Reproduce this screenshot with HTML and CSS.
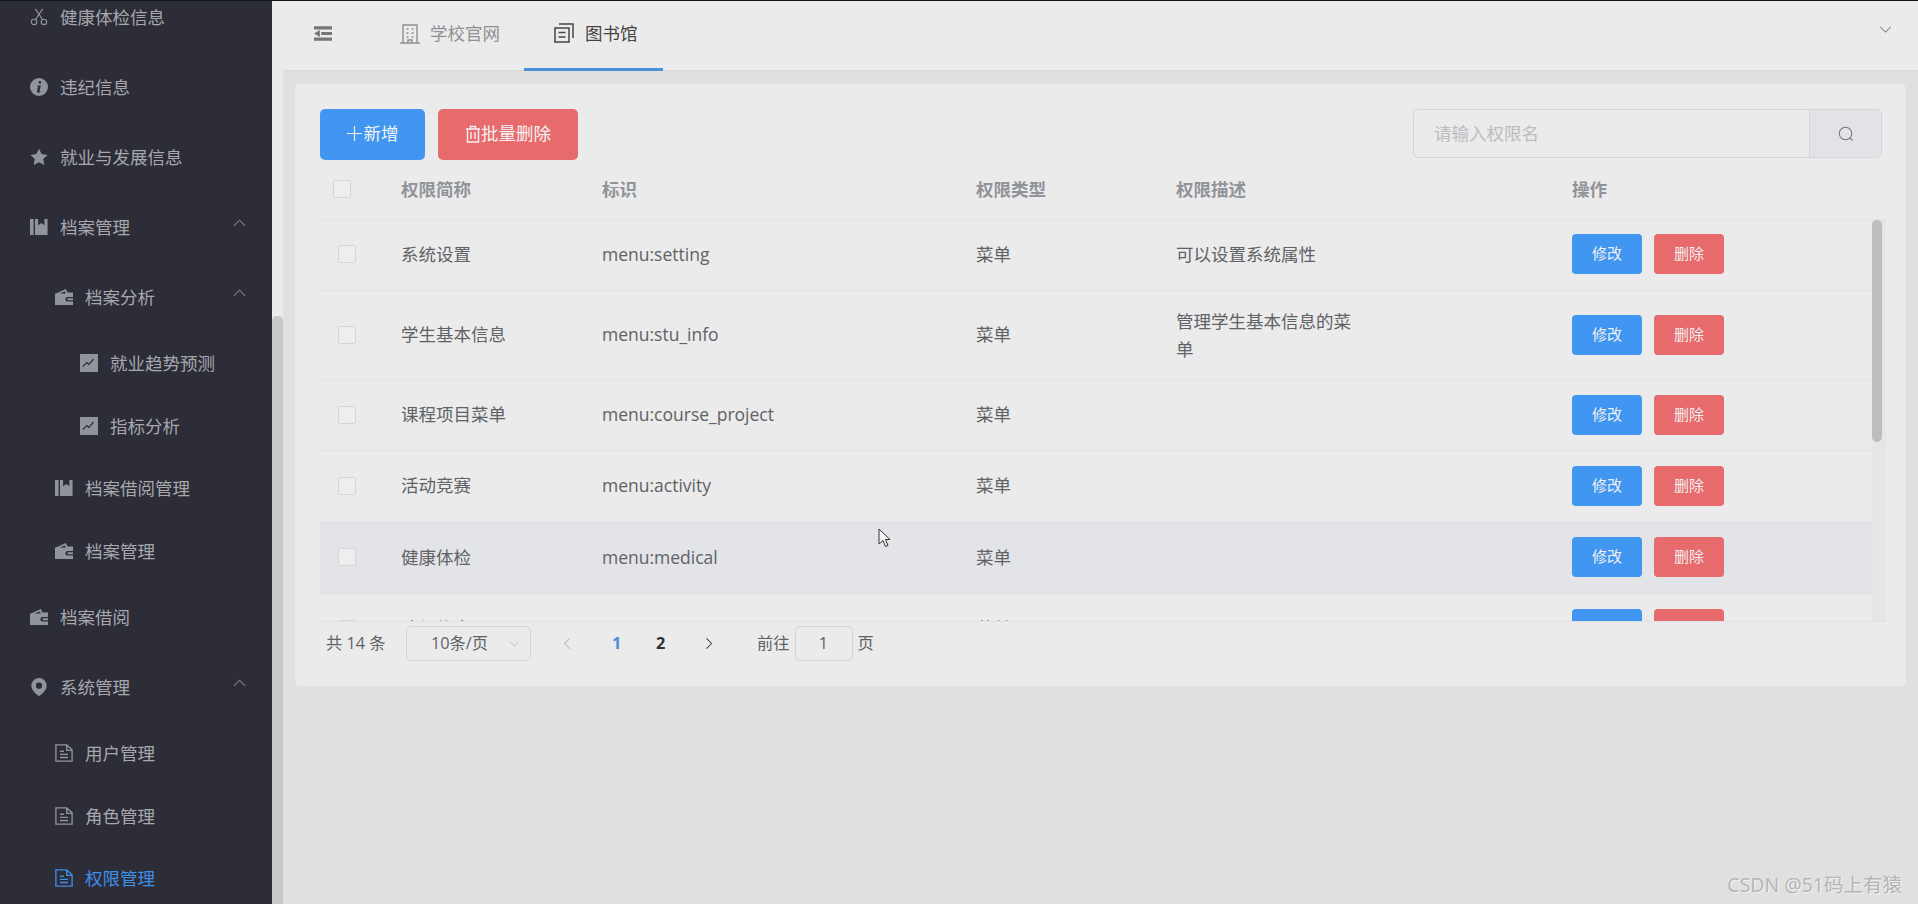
FILE: index.html
```html
<!DOCTYPE html>
<html lang="en">
<head>
    <meta charset="UTF-8">
    <meta name="viewport" content="width=device-width, initial-scale=1.0">
    <title>权限管理</title>
    <link rel="stylesheet" href="styles.css">
</head>
<body>
<svg class="icon-defs" width="0" height="0">
    <symbol id="i-scissors" viewBox="0 0 20 20">
        <circle cx="4.500" cy="15.500" r="3" fill="none" stroke="currentColor" stroke-width="1.300"/>
        <circle cx="15.500" cy="15.500" r="3" fill="none" stroke="currentColor" stroke-width="1.300"/>
        <path d="M6 13 14 1M14 13 6 1" fill="none" stroke="currentColor" stroke-width="1.300"/>
    </symbol>
    <symbol id="i-info" viewBox="0 0 20 20">
        <path fill-rule="evenodd" d="M10 0a10 10 0 1 1 0 20 10 10 0 0 1 0-20zm1 3.200a1.600 1.600 0 1 0 0 3.200 1.600 1.600 0 0 0 0-3.200zM8 8.200l-.2.9h1.200l-1.300 5.600c-.2 1 .4 1.600 1.400 1.600 1 0 1.800-.4 2.500-1l.1-.8h-1.100l1.500-6.300z"/>
    </symbol>
    <symbol id="i-star" viewBox="0 0 20 20">
        <path d="M10 .8l2.900 6 6.600.9-4.800 4.600 1.200 6.500L10 15.700l-5.900 3.100 1.200-6.500L.5 7.700l6.600-.9z"/>
    </symbol>
    <symbol id="i-book" viewBox="0 0 20 20">
        <path d="M0 1h4v18H0zM5.500 1H9v7l3.500-2.500L16 8V1h3.500v18h-14z"/>
    </symbol>
    <symbol id="i-wallet" viewBox="0 0 20 20">
        <path fill-rule="evenodd" d="M1 6 12 1l2 4h6v5h-6a2.500 2.500 0 0 0 0 5h6v4H0V6zm4 0h7l-1-2zm9 5.500h6v2h-6z"/>
    </symbol>
    <symbol id="i-chart" viewBox="0 0 20 20">
        <path fill-rule="evenodd" d="M0 0h20v20H0zm3.500 14.500 4-4 2.500 2 5.500-6.500-1-1-4.500 5.500-2.500-2-5 5z"/>
    </symbol>
    <symbol id="i-location" viewBox="0 0 20 20">
        <path fill-rule="evenodd" d="M10 0a8.500 8.500 0 0 1 8.500 8.500C18.500 13 14 17.500 10 20 6 17.500 1.500 13 1.500 8.500A8.500 8.500 0 0 1 10 0zm0 5a3.500 3.500 0 1 0 0 7 3.500 3.500 0 0 0 0-7z"/>
    </symbol>
    <symbol id="i-doc" viewBox="0 0 20 20">
        <path d="M1 1h12l6 5.500V19H1zM13 1v6h6M5.500 8H10M5.500 11.500h9M5.500 15h9" fill="none" stroke="currentColor" stroke-width="1.500"/>
    </symbol>
    <symbol id="i-fold" viewBox="0 0 20 16">
        <path d="M0 0h20v3.500H0zM8 6.200h12v3.500H8zM0 12.500h20V16H0zM6.500 4.200v7.600L0 8z"/>
    </symbol>
    <symbol id="i-building" viewBox="0 0 20 20">
        <path d="M3 19V1h14v18M0 19h20M6.500 5h2M11.500 5h2M6.500 9h2M11.500 9h2M6.500 13h2M11.500 13h2M8 19v-3h4v3" fill="none" stroke="currentColor" stroke-width="1.400"/>
    </symbol>
    <symbol id="i-tickets" viewBox="0 0 20 20">
        <path d="M1 5h14v14H1zM5 1h14v14M4.500 9.500h7M4.500 14h7" fill="none" stroke="currentColor" stroke-width="1.500"/>
    </symbol>
    <symbol id="i-chevron-up" viewBox="0 0 14 8">
        <path d="M1 7 7 1l6 6" fill="none" stroke="currentColor" stroke-width="1.200"/>
    </symbol>
    <symbol id="i-chevron-down" viewBox="0 0 14 8">
        <path d="M1 1l6 6 6-6" fill="none" stroke="currentColor" stroke-width="1.200"/>
    </symbol>
    <symbol id="i-plus" viewBox="0 0 16 16">
        <path d="M8 0v16M0 8h16" fill="none" stroke="currentColor" stroke-width="1.300"/>
    </symbol>
    <symbol id="i-trash" viewBox="0 0 16 18">
        <path d="M1 4h14M5.500 4V1.500h5V4M2.500 4v13h11V4M6 7v7M10 7v7" fill="none" stroke="currentColor" stroke-width="1.400"/>
    </symbol>
    <symbol id="i-search" viewBox="0 0 18 18">
        <circle cx="8.500" cy="8.500" r="7" fill="none" stroke="currentColor" stroke-width="1.200"/>
        <path d="M13.500 13.500 16.500 16.500" fill="none" stroke="currentColor" stroke-width="1.200"/>
    </symbol>
</svg>

<div class="page">
    <!-- Left menu, scrolled part way down -->
    <aside class="sidebar">
        <nav class="menu">
            <div class="menu-item level-1"><svg class="menu-icon"><use href="#i-scissors"/></svg>健康体检信息</div>
            <div class="menu-item level-1"><svg class="menu-icon"><use href="#i-info"/></svg>违纪信息</div>
            <div class="menu-item level-1"><svg class="menu-icon"><use href="#i-star"/></svg>就业与发展信息</div>
            <div class="menu-item level-1"><svg class="menu-icon"><use href="#i-book"/></svg>档案管理<svg class="menu-arrow"><use href="#i-chevron-up"/></svg></div>
            <div class="menu-item level-2"><svg class="menu-icon"><use href="#i-wallet"/></svg>档案分析<svg class="menu-arrow"><use href="#i-chevron-up"/></svg></div>
            <div class="menu-item sub level-3"><svg class="menu-icon"><use href="#i-chart"/></svg>就业趋势预测</div>
            <div class="menu-item sub level-3"><svg class="menu-icon"><use href="#i-chart"/></svg>指标分析</div>
            <div class="menu-item sub level-2"><svg class="menu-icon"><use href="#i-book"/></svg>档案借阅管理</div>
            <div class="menu-item sub level-2"><svg class="menu-icon"><use href="#i-wallet"/></svg>档案管理</div>
            <div class="menu-item level-1"><svg class="menu-icon"><use href="#i-wallet"/></svg>档案借阅</div>
            <div class="menu-item level-1"><svg class="menu-icon"><use href="#i-location"/></svg>系统管理<svg class="menu-arrow"><use href="#i-chevron-up"/></svg></div>
            <div class="menu-item sub level-2"><svg class="menu-icon"><use href="#i-doc"/></svg>用户管理</div>
            <div class="menu-item sub level-2"><svg class="menu-icon"><use href="#i-doc"/></svg>角色管理</div>
            <div class="menu-item sub level-2 active"><svg class="menu-icon"><use href="#i-doc"/></svg>权限管理</div>
        </nav>
    </aside>

    <div class="page-scroll"><div class="page-thumb"></div></div>

    <main class="main">
        <header class="topbar">
            <svg class="fold-icon"><use href="#i-fold"/></svg>
            <div class="tab"><svg class="tab-icon"><use href="#i-building"/></svg>学校官网</div>
            <div class="tab tab-active"><svg class="tab-icon"><use href="#i-tickets"/></svg>图书馆</div>
            <svg class="topbar-arrow"><use href="#i-chevron-down"/></svg>
        </header>

        <section class="card">
            <div class="toolbar">
                <div class="button button-blue"><svg class="plus-icon"><use href="#i-plus"/></svg>新增</div>
                <div class="button button-red"><svg class="trash-icon"><use href="#i-trash"/></svg>批量删除</div>
                <div class="search">
                    <div class="search-input">请输入权限名</div>
                    <div class="search-button"><svg class="search-icon"><use href="#i-search"/></svg></div>
                </div>
            </div>

            <table class="table table-head">
                <colgroup>
                    <col class="col-check"><col class="col-name"><col class="col-key"><col class="col-type"><col class="col-desc"><col>
                </colgroup>
                <tr>
                    <th><span class="checkbox checkbox-head"></span></th>
                    <th>权限简称</th>
                    <th>标识</th>
                    <th>权限类型</th>
                    <th>权限描述</th>
                    <th>操作</th>
                </tr>
            </table>

            <div class="table-body">
                <table class="table">
                    <colgroup>
                        <col class="col-check"><col class="col-name"><col class="col-key"><col class="col-type"><col class="col-desc"><col>
                    </colgroup>
                    <tr>
                        <td><span class="checkbox"></span></td>
                        <td>系统设置</td>
                        <td>menu:setting</td>
                        <td>菜单</td>
                        <td>可以设置系统属性</td>
                        <td><div class="actions"><div class="mini mini-blue">修改</div><div class="mini mini-red">删除</div></div></td>
                    </tr>
                    <tr class="row-tall">
                        <td><span class="checkbox"></span></td>
                        <td>学生基本信息</td>
                        <td>menu:stu_info</td>
                        <td>菜单</td>
                        <td><div class="desc-wrap">管理学生基本信息的菜单</div></td>
                        <td><div class="actions"><div class="mini mini-blue">修改</div><div class="mini mini-red">删除</div></div></td>
                    </tr>
                    <tr>
                        <td><span class="checkbox"></span></td>
                        <td>课程项目菜单</td>
                        <td>menu:course_project</td>
                        <td>菜单</td>
                        <td></td>
                        <td><div class="actions"><div class="mini mini-blue">修改</div><div class="mini mini-red">删除</div></div></td>
                    </tr>
                    <tr>
                        <td><span class="checkbox"></span></td>
                        <td>活动竞赛</td>
                        <td>menu:activity</td>
                        <td>菜单</td>
                        <td></td>
                        <td><div class="actions"><div class="mini mini-blue">修改</div><div class="mini mini-red">删除</div></div></td>
                    </tr>
                    <tr class="row-hover">
                        <td><span class="checkbox"></span></td>
                        <td>健康体检</td>
                        <td>menu:medical</td>
                        <td>菜单</td>
                        <td></td>
                        <td><div class="actions"><div class="mini mini-blue">修改</div><div class="mini mini-red">删除</div></div></td>
                    </tr>
                    <tr>
                        <td><span class="checkbox"></span></td>
                        <td>违纪信息</td>
                        <td>menu:discipline</td>
                        <td>菜单</td>
                        <td></td>
                        <td><div class="actions"><div class="mini mini-blue">修改</div><div class="mini mini-red">删除</div></div></td>
                    </tr>
                </table>
                <div class="table-scroll"><div class="table-thumb"></div></div>
            </div>

            <div class="pager">
                <span class="pager-total">共 14 条</span>
                <div class="pager-size">10条/页<svg class="pager-size-arrow"><use href="#i-chevron-down"/></svg></div>
                <svg class="pager-prev"><use href="#i-chevron-up"/></svg>
                <span class="pager-num pager-current">1</span>
                <span class="pager-num">2</span>
                <svg class="pager-next"><use href="#i-chevron-up"/></svg>
                <span class="pager-goto">前往</span>
                <div class="pager-input">1</div>
                <span>页</span>
            </div>
        </section>
    </main>
</div>

<!-- mouse pointer caught in the screenshot -->
<svg class="cursor" viewBox="0 0 13 20"><path d="M1 1v15l4-3.500 2.500 6 2.500-1-2.500-6H12z" fill="#f4f4f4" stroke="#333" stroke-width="1"/></svg>
<div class="watermark">CSDN @51码上有猿</div>
</body>
</html>
```

FILE: styles.css
```css
/* Layout is a 125% zoom of the usual 14px admin page, hence the odd sizes */
body {
    margin: 0;
    height: 904px;
    overflow: hidden;
    background-color: #e0e0e0;
    font-family: "Open Sans", "Noto Sans CJK SC", sans-serif;
    font-size: 17.5px;
    line-height: 1.5;
    color: #606266;
}
.icon-defs {
    position: absolute;
}
.page {
    display: flex;
    height: 903px;
    border-top: 1px solid #10171f;
}

/* Sidebar */
.sidebar {
    width: 272px;
    flex-shrink: 0;
    overflow: hidden;
    background-color: #2d2d38;
}
.menu {
    margin-top: -19px;
}
.menu-item {
    display: flex;
    align-items: center;
    height: 70px;
    color: #a6a8ae;
    white-space: nowrap;
}
.menu-item.sub {
    height: 62.5px;
}
.level-1 {
    padding-left: 30px;
}
.level-2 {
    padding-left: 55px;
}
.level-3 {
    padding-left: 80px;
}
.menu-icon {
    width: 18px;
    height: 18px;
    margin-right: 12px;
    flex-shrink: 0;
    fill: #92949b;
    color: #92949b;
}
.menu-arrow {
    width: 13px;
    height: 8px;
    margin-left: auto;
    margin-right: 26px;
    margin-bottom: 8px;
    color: #7d7f86;
}
.menu-item.active {
    color: #3f8ee8;
}
.menu-item.active .menu-icon {
    color: #3f8ee8;
}

/* Page scrollbar */
.page-scroll {
    width: 11px;
    flex-shrink: 0;
    background-color: #ebebeb;
}
.page-thumb {
    height: 590px;
    margin-top: 315px;
    border-radius: 5px 5px 0 0;
    background-color: #c8c8c8;
}

.main {
    flex: 1;
    min-width: 0;
}

/* Top bar with tabs */
.topbar {
    display: flex;
    align-items: stretch;
    height: 70px;
    box-sizing: border-box;
    padding-left: 31px;
    background-color: #ebebeb;
    border-bottom: 1px solid #d9d9d9;
}
.fold-icon {
    width: 18px;
    height: 15px;
    margin-top: 25px;
    margin-right: 38px;
    fill: #777;
}
.tab {
    display: flex;
    align-items: center;
    padding: 0 25px 4px 30px;
    color: #8f9094;
    white-space: nowrap;
}
.tab-icon {
    width: 20px;
    height: 20px;
    margin-right: 10px;
}
.tab-active {
    width: 139px;
    height: 70px;
    box-sizing: border-box;
    margin-left: -1px;
    padding-right: 0;
    padding-bottom: 3px;
    color: #454545;
    border-bottom: 3px solid #4a90d9;
}
.tab-active .tab-icon {
    margin-right: 11px;
}
.topbar-arrow {
    width: 13px;
    height: 7px;
    margin: 25px 26px 0 auto;
    color: #8c8c8c;
}

/* Card */
.card {
    margin: 13px 12px 0;
    padding: 25px 20px 20px 25px;
    background-color: #ebebeb;
    border-radius: 5px;
}
.toolbar {
    display: flex;
    gap: 13px;
    margin-bottom: 5px;
}
.button {
    display: flex;
    align-items: center;
    justify-content: center;
    height: 51px;
    box-sizing: border-box;
    padding-bottom: 2px;
    border-radius: 5px;
    color: #f3f3f3;
}
.button-blue {
    width: 105px;
    background-color: #4096f0;
}
.button-red {
    width: 140px;
    background-color: #e76a6c;
}
.plus-icon {
    width: 15px;
    height: 15px;
    margin-right: 2px;
}
.trash-icon {
    width: 16px;
    height: 18px;
}
.search {
    display: flex;
    width: 469px;
    height: 49px;
    box-sizing: border-box;
    margin-left: auto;
    margin-right: 4px;
    border: 1px solid #d4d5d9;
    border-radius: 5px;
    overflow: hidden;
}
.search-input {
    flex: 1;
    padding-left: 20px;
    line-height: 46px;
    color: #bcbdc1;
}
.search-button {
    display: flex;
    align-items: center;
    justify-content: center;
    width: 71px;
    border-left: 1px solid #d4d5d9;
    background-color: #e2e3e7;
}
.search-icon {
    width: 16px;
    height: 16px;
    color: #75767a;
}

/* Table */
.table {
    width: 100%;
    table-layout: fixed;
    border-collapse: collapse;
}
.col-check {
    width: 81px;
}
.col-name {
    width: 201px;
}
.col-key {
    width: 374px;
}
.col-type {
    width: 200px;
}
.col-desc {
    width: 396px;
}
.table th {
    height: 54px;
    box-sizing: border-box;
    padding: 0 0 6px;
    text-align: left;
    color: #909399;
    border-bottom: 1px solid #e0e2e6;
}
.table td {
    height: 71px;
    box-sizing: border-box;
    padding: 0 0 1px;
    border-bottom: 1px solid #e0e2e6;
}
.table .row-tall td {
    height: 89px;
}
.table .row-hover td {
    height: 72px;
    background-color: #e3e4e7;
}
.checkbox {
    display: block;
    width: 16px;
    height: 16px;
    margin-left: 18px;
    border: 1px solid #d5d6da;
    border-radius: 2px;
    background-color: #eeeeee;
}
.checkbox-head {
    margin-left: 13px;
}
.desc-wrap {
    width: 180px;
    line-height: 28px;
}
.actions {
    display: flex;
    gap: 12px;
}
.mini {
    width: 70px;
    height: 40px;
    border-radius: 4px;
    text-align: center;
    line-height: 39px;
    font-size: 15px;
    color: #f0f0f0;
}
.mini-blue {
    background-color: #4096f0;
}
.mini-red {
    background-color: #e76a6c;
}
.table-body {
    position: relative;
    height: 401px;
    padding-right: 14px;
    overflow: hidden;
    border-bottom: 1px solid #e0e2e6;
}
.table-scroll {
    position: absolute;
    top: 0;
    right: 0;
    bottom: 0;
    width: 14px;
    background-color: #e6e6e6;
}
.table-thumb {
    width: 10px;
    height: 222px;
    border-radius: 5px;
    background-color: #bdbdbd;
}

/* Pagination */
.pager {
    display: flex;
    align-items: center;
    height: 44px;
    padding-left: 6px;
    font-size: 16.25px;
}
.pager-total {
    width: 80px;
    flex-shrink: 0;
}
.pager-size {
    display: flex;
    align-items: center;
    width: 125px;
    height: 35px;
    flex-shrink: 0;
    box-sizing: border-box;
    padding-left: 24px;
    border: 1px solid #d4d5d9;
    border-radius: 5px;
}
.pager-size-arrow {
    width: 11px;
    height: 6px;
    margin-left: auto;
    margin-right: 10px;
    color: #bcbdc1;
}
.pager-prev,
.pager-next {
    width: 12px;
    height: 7px;
    flex-shrink: 0;
    color: #b5b6ba;
}
.pager-prev {
    margin-left: 30px;
    transform: rotate(-90deg);
}
.pager-next {
    margin-left: 37px;
    color: #444;
    transform: rotate(90deg);
}
.pager-num {
    width: 10px;
    margin-left: 34px;
    font-weight: bold;
    color: #303133;
}
.pager-current {
    margin-left: 39px;
    color: #4a90d9;
}
.pager-goto {
    margin-left: 42px;
}
.pager-input {
    width: 58px;
    height: 35px;
    flex-shrink: 0;
    box-sizing: border-box;
    margin: 0 5px 0 5px;
    border: 1px solid #d4d5d9;
    border-radius: 5px;
    text-align: center;
    line-height: 33px;
}

/* Things lying over the page */
.cursor {
    position: absolute;
    left: 878px;
    top: 528px;
    width: 13px;
    height: 20px;
}
.watermark {
    position: absolute;
    right: 16px;
    top: 870px;
    font-size: 19.5px;
    color: #b4b4b4;
    text-shadow: 1px 1px 0 #f2f2f2;
}
```
